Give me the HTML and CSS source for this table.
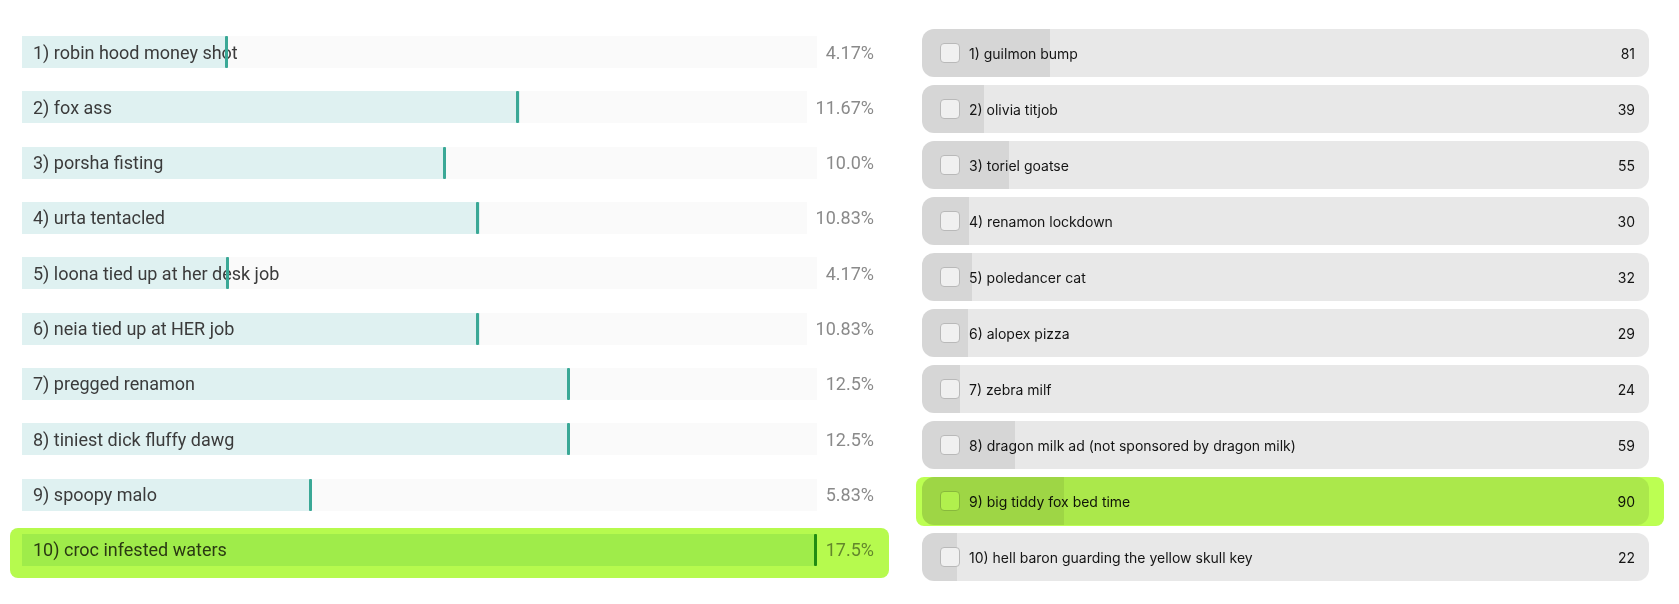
FILE: index.html
```html
<!DOCTYPE html>
<html lang="en">
<head>
<meta charset="utf-8">
<title>Poll results</title>
<link rel="stylesheet" href="styles.css">
</head>
<body>
<main class="page">
  <section class="results">
    <div class="result"><div class="track" style="--p:25.9%"><span class="label">1) robin hood money shot</span></div><span class="pct">4.17%</span></div>
    <div class="result"><div class="track" style="--p:63.4%"><span class="label">2) fox ass</span></div><span class="pct">11.67%</span></div>
    <div class="result"><div class="track" style="--p:53.3%"><span class="label">3) porsha fisting</span></div><span class="pct">10.0%</span></div>
    <div class="result"><div class="track" style="--p:58.3%"><span class="label">4) urta tentacled</span></div><span class="pct">10.83%</span></div>
    <div class="result"><div class="track" style="--p:26%"><span class="label">5) loona tied up at her desk job</span></div><span class="pct">4.17%</span></div>
    <div class="result"><div class="track" style="--p:58.3%"><span class="label">6) neia tied up at HER job</span></div><span class="pct">10.83%</span></div>
    <div class="result"><div class="track" style="--p:68.9%"><span class="label">7) pregged renamon</span></div><span class="pct">12.5%</span></div>
    <div class="result"><div class="track" style="--p:68.9%"><span class="label">8) tiniest dick fluffy dawg</span></div><span class="pct">12.5%</span></div>
    <div class="result"><div class="track" style="--p:36.5%"><span class="label">9) spoopy malo</span></div><span class="pct">5.83%</span></div>
    <div class="result marked"><div class="track" style="--p:100%"><span class="label">10) croc infested waters</span></div><span class="pct">17.5%</span></div>
  </section>

  <section class="options">
    <div class="option" style="--p:17.57%"><span class="box"></span><span class="name">1) guilmon bump</span><span class="count">81</span></div>
    <div class="option" style="--p:8.46%"><span class="box"></span><span class="name">2) olivia titjob</span><span class="count">39</span></div>
    <div class="option" style="--p:11.93%"><span class="box"></span><span class="name">3) toriel goatse</span><span class="count">55</span></div>
    <div class="option" style="--p:6.51%"><span class="box"></span><span class="name">4) renamon lockdown</span><span class="count">30</span></div>
    <div class="option" style="--p:6.94%"><span class="box"></span><span class="name">5) poledancer cat</span><span class="count">32</span></div>
    <div class="option" style="--p:6.29%"><span class="box"></span><span class="name">6) alopex pizza</span><span class="count">29</span></div>
    <div class="option" style="--p:5.21%"><span class="box"></span><span class="name">7) zebra milf</span><span class="count">24</span></div>
    <div class="option" style="--p:12.8%"><span class="box"></span><span class="name">8) dragon milk ad (not sponsored by dragon milk)</span><span class="count">59</span></div>
    <div class="option marked" style="--p:19.52%"><span class="box"></span><span class="name">9) big tiddy fox bed time</span><span class="count">90</span></div>
    <div class="option" style="--p:4.77%"><span class="box"></span><span class="name">10) hell baron guarding the yellow skull key</span><span class="count">22</span></div>
  </section>
</main>
</body>
</html>
```

FILE: styles.css
```css
html, body {
  margin: 0;
  padding: 0;
  background: #ffffff;
}

.page {
  display: flex;
  align-items: flex-start;
  gap: 48px;
  padding: 0 30px 0 22px;
}

/* ---------- left: results ---------- */
.results {
  width: 852px;
  flex: none;
  display: flex;
  flex-direction: column;
  gap: 23.33px;
  padding-top: 36px;
  font-family: Roboto, "Liberation Sans", sans-serif;
  font-size: 18px;
}

.result {
  position: relative;
  display: flex;
  align-items: center;
  height: 32px;
}

.track {
  position: relative;
  flex: 1;
  height: 100%;
  display: flex;
  align-items: center;
  padding-left: 11px;
  background: linear-gradient(to right, #dff1f1 var(--p), #fafafa var(--p));
}

.track::after {
  content: "";
  position: absolute;
  top: 0;
  bottom: 0;
  left: calc(var(--p) - 3px);
  width: 3px;
  border-radius: 1px;
  background: #3aa896;
}

.label {
  color: #3b3b3b;
  white-space: nowrap;
}

.pct {
  margin-left: 9px;
  color: #8a8a8a;
  white-space: nowrap;
}

/* ---------- right: options ---------- */
.options {
  width: 727px;
  flex: none;
  display: flex;
  flex-direction: column;
  gap: 8px;
  padding-top: 29px;
  font-family: Inter, "Noto Sans", sans-serif;
  font-size: 14px;
}

.option {
  position: relative;
  height: 48px;
  display: flex;
  align-items: center;
  padding: 0 14px 0 18px;
  border-radius: 12px;
  background: linear-gradient(to right, #d6d6d6 var(--p), #e8e8e8 var(--p));
  color: #141414;
}

.box {
  width: 18px;
  height: 18px;
  flex: none;
  border: 1px solid #b9b9b9;
  border-radius: 4px;
  background: #f0f0f0;
  margin-right: 9px;
}

.name {
  white-space: nowrap;
}

.count {
  margin-left: auto;
}

/* ---------- highlighter marks ---------- */
.marked::before {
  content: "";
  position: absolute;
  z-index: 2;
  border-radius: 8px;
  background: #b6fa4e;
  mix-blend-mode: multiply;
  pointer-events: none;
}

.result.marked::before {
  top: -6px;
  bottom: -12px;
  left: -12px;
  right: -15px;
}

.result.marked .track::after {
  background: #2f8f3a;
}

.option.marked::before {
  top: 0;
  bottom: -1px;
  left: -6px;
  right: -15px;
  background: #bcff52;
}
```
